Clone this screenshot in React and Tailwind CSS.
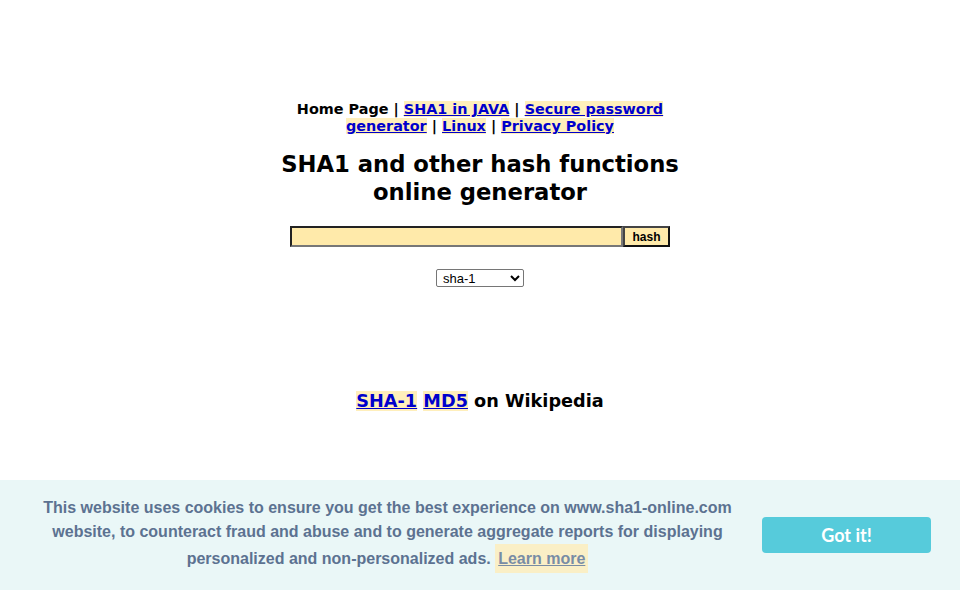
export default function App() {
  const link = "text-[#0000cc] underline bg-[#ffefbb]";

  return (
    <div className="min-h-screen bg-white font-['DejaVu_Sans',Verdana,sans-serif] text-black">
      <div className="mx-auto w-[420px] pt-[101px] text-center">
        {/* menu */}
        <p className="text-[14.4px] font-bold leading-[17px]">
          Home Page | <a href="#" className={link}>SHA1 in JAVA</a> |{" "}
          <a href="#" className={link}>Secure password generator</a> |{" "}
          <a href="#" className={link}>Linux</a> |{" "}
          <a href="#" className={link}>Privacy Policy</a>
        </p>

        <h1 className="mt-[15px] text-[22.7px] font-bold leading-[28px]">
          SHA1 and other hash functions
          <br />
          online generator
        </h1>

        {/* form */}
        <div className="mt-[20px] flex justify-center">
          <input
            type="text"
            className="h-[21px] w-[333px] border-2 border-t-[#222] border-l-[#222] border-b-[#777] border-r-[#777] bg-[#ffeaaa] outline-none"
          />
          <button className="h-[21px] w-[47px] border-2 border-t-[#444] border-l-[#444] border-b-[#111] border-r-[#111] bg-[#ffeaaa] font-['Liberation_Sans',Arial,sans-serif] text-[12px] font-bold leading-none">
            hash
          </button>
        </div>

        <div className="mt-[22px] flex justify-center">
          <select className="h-[18px] w-[88px] rounded-[2px] border border-[#767676] bg-white pl-[2px] font-['Liberation_Sans',Arial,sans-serif] text-[13px] leading-none">
            <option>sha-1</option>
            <option>md5</option>
            <option>sha-256</option>
          </select>
        </div>

        <p className="mt-[103px] text-[17.7px] font-bold leading-[22px]">
          <a href="#" className={link}>SHA-1</a>{" "}
          <a href="#" className={link}>MD5</a> on Wikipedia
        </p>
      </div>

      {/* cookie bar */}
      <div className="fixed bottom-0 left-0 right-0 flex items-center bg-[#eaf7f7] px-[29px] pb-[17px] pt-[16px] font-['Liberation_Sans',Arial,sans-serif] text-[16px] font-bold leading-[24px] text-[#5c7291]">
        <p className="flex-1 text-center">
          This website uses cookies to ensure you get the best experience on www.sha1-online.com website, to counteract fraud and abuse and to generate aggregate reports for displaying personalized and non-personalized ads.{" "}
          <a href="#" className="inline-block bg-[#ffeebb] px-[3px] leading-[29px] text-[#5c7291] underline opacity-80">
            Learn more
          </a>
        </p>
        <button className="ml-4 h-[36px] w-[169px] rounded-[4px] bg-[#56cbdb] font-['Lato',sans-serif] text-[18px] font-bold text-white">
          Got it!
        </button>
      </div>
    </div>
  );
}
